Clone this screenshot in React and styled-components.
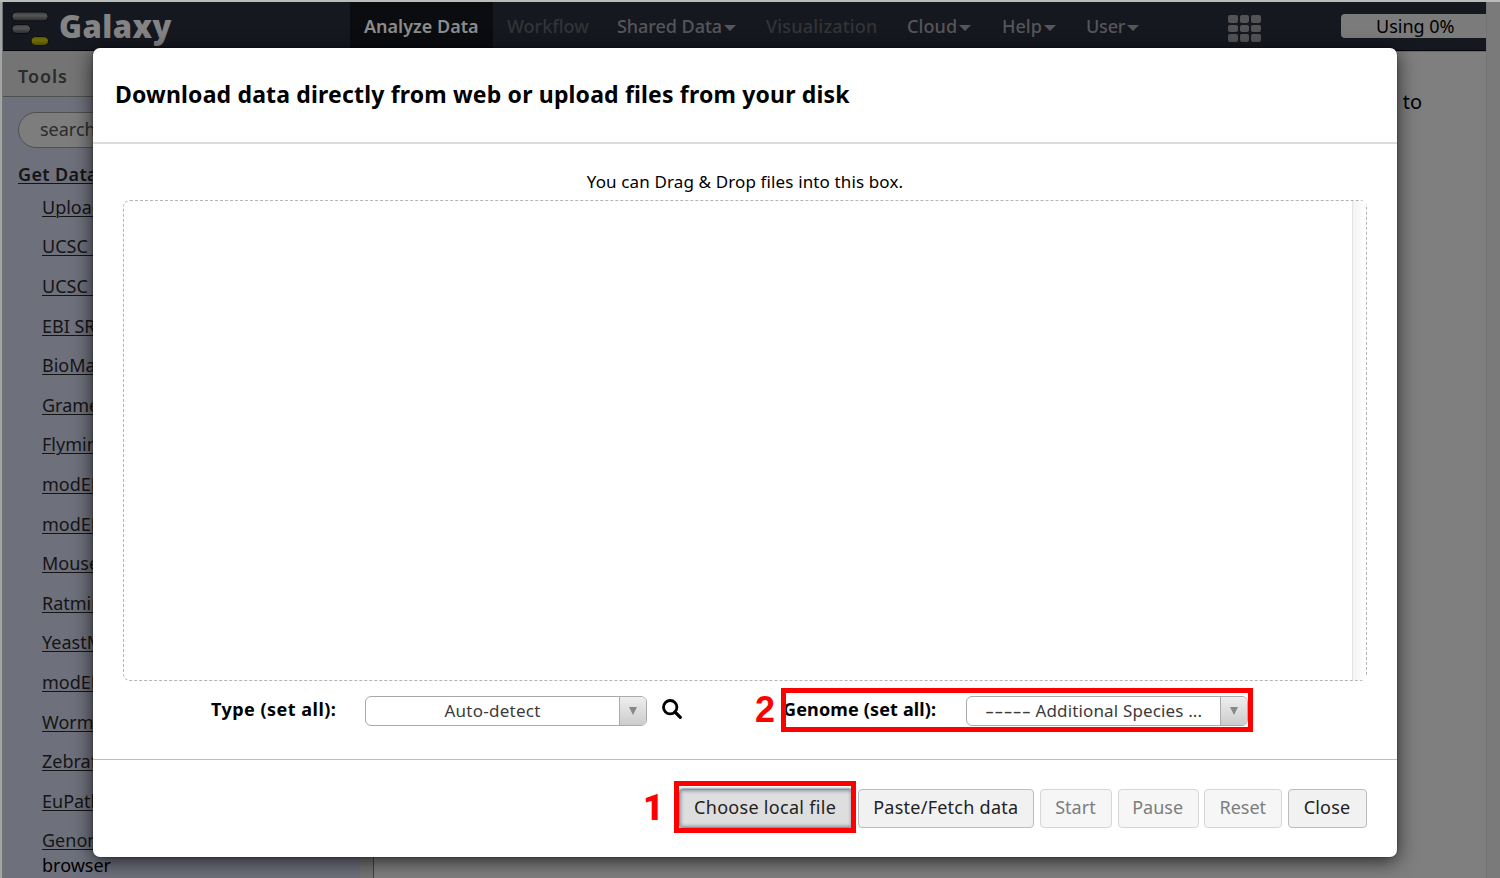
import React from "react";
import styled, { createGlobalStyle } from "styled-components";

const GlobalStyle = createGlobalStyle`
  * { box-sizing: border-box; }
  body {
    margin: 0;
    overflow: hidden;
    background: #7f7f7f;
    font-family: "Noto Sans", "Open Sans", sans-serif;
    font-size: 18px;
    color: #000;
  }
`;

const Page = styled.div`
  position: relative;
  display: flex;
  flex-direction: column;
  width: 1500px;
  height: 878px;
  overflow: hidden;
  border-top: 2px solid #b9bdba;
  white-space: nowrap;
`;

const Window = styled.div`
  flex: 1;
  min-height: 0;
  display: flex;
  border-left: 2px solid #a3a5a4;
`;

const Content = styled.div`
  flex: 1;
  display: flex;
  flex-direction: column;
  border-left: 1px solid #747675;
`;

const Gutter = styled.div`
  width: 14px;
  background: #7a7a7a;
  border-left: 1px solid #737373;
`;

const Masthead = styled.header`
  display: flex;
  height: 49px;
  flex: none;
  background: #161820;
  border-bottom: 1px solid #050608;
  box-shadow: 0 1px 0 #6a6a6a;
`;

const Brand = styled.div`
  display: flex;
  width: 347px;
  padding: 9px 0 0 8px;
`;

const BrandName = styled.span`
  margin: -1px 0 0 7px;
  font-size: 31px;
  font-weight: 900;
  line-height: 32px;
  letter-spacing: 0.5px;
  color: #848484;
`;

const NavItem = styled.a`
  display: flex;
  align-items: center;
  width: ${(p) => p.$width}px;
  padding: 0 0 0 14px;
  font-size: 18px;
  font-weight: ${(p) => (p.$active ? 600 : 500)};
  letter-spacing: ${(p) => p.$spacing || 0}px;
  background: ${(p) => (p.$active ? "#0b0c10" : "transparent")};
  color: ${(p) => (p.$active ? "#8c8c8c" : p.$disabled ? "#343436" : "#565658")};
`;

const Caret = styled.i`
  margin: 3px 0 0 2px;
  border: 6px solid transparent;
  border-top-color: currentColor;
  border-bottom: 0;
`;

const Grid = styled.div`
  display: grid;
  grid-template-columns: repeat(3, 9.5px);
  grid-auto-rows: 7.5px;
  gap: 2px;
  margin: 13px 0 0 77px;
`;

const GridCell = styled.i`
  border-radius: 2px;
  background: #535355;
`;

const Quota = styled.div`
  width: 145px;
  height: 24px;
  margin: 12px 0 0 auto;
  padding-left: 35px;
  border-radius: 4px 0 0 4px;
  background: #7b7b7b;
  font-size: 18px;
  line-height: 24px;
`;

const Columns = styled.div`
  flex: 1;
  min-height: 0;
  display: flex;
`;

const Sidebar = styled.aside`
  width: 357px;
  background: #6e707c;
`;

const SidebarTitle = styled.h2`
  margin: 1px 0 0;
  height: 45px;
  padding-left: 15px;
  border-bottom: 1px solid #505050;
  background: #747474;
  font-size: 18px;
  font-weight: 600;
  line-height: 49px;
  letter-spacing: 0.9px;
  color: #2b2b2b;
`;

const Search = styled.div`
  width: 320px;
  height: 36px;
  margin: 15px 0 0 15px;
  padding-left: 21px;
  border: 1px solid #505050;
  border-radius: 18px;
  background: #7d7d7d;
  line-height: 33px;
  color: #2b2b2b;
`;

const Section = styled.div`
  margin: 13px 0 0 15px;
  font-weight: 600;
  line-height: 26px;
  letter-spacing: 0.35px;
  color: #151515;
  text-decoration: underline;
  text-decoration-thickness: 1px;
  text-underline-offset: 2px;
`;

const Tool = styled.div`
  height: 39.6px;
  padding-left: 39px;
  line-height: 25px;
  color: #000;
`;

const ToolList = styled.div`
  padding-top: 7.9px;
`;

const ToolLink = styled.a`
  color: #151515;
  text-decoration: underline;
  text-decoration-thickness: 1px;
  text-underline-offset: 2px;
`;

const Splitter = styled.div`
  width: 14px;
  border-right: 1px solid #424242;
  background: #747474;
`;

const Main = styled.main`
  flex: 1;
  padding: 38px 64px 0 0;
  text-align: right;
  font-size: 20px;
  line-height: 26px;
`;

const Modal = styled.section`
  position: absolute;
  left: 93px;
  top: 46px;
  width: 1304px;
  height: 809px;
  display: flex;
  flex-direction: column;
  border-radius: 7px;
  background: #fff;
  box-shadow: 0 4px 20px rgba(0, 0, 0, 0.7), 0 0 2px rgba(0, 0, 0, 0.5);
`;

const ModalHeader = styled.header`
  height: 96px;
  padding-left: 22px;
  border-bottom: 2px solid #dcdcdc;
  font-size: 23px;
  font-weight: 700;
  line-height: 92px;
  letter-spacing: 0.17px;
`;

const ModalBody = styled.div`
  flex: 1;
  padding: 26px 30px 0;
`;

const Hint = styled.div`
  height: 30px;
  text-align: center;
  font-size: 17px;
  line-height: 24px;
  letter-spacing: 0.13px;
`;

const DropBox = styled.div`
  display: flex;
  justify-content: flex-end;
  height: 481px;
  border: 1px dashed #b4b4b4;
  border-radius: 7px;
`;

const ScrollTrack = styled.div`
  width: 14px;
  border-left: 1px solid #e4e4e4;
  background: linear-gradient(to right, #f4f4f4, #fff);
`;

const Options = styled.div`
  display: flex;
  align-items: flex-start;
  padding: 15px 0 0 88px;
`;

const Label = styled.b`
  width: ${(p) => p.$width}px;
  font-size: 18px;
  font-weight: 700;
  line-height: 26px;
  letter-spacing: ${(p) => p.$spacing}px;
`;

const Select = styled.div`
  display: flex;
  width: 282px;
  height: 30px;
  border: 1px solid #aaa;
  border-radius: 6px;
  overflow: hidden;
  background: #fff;
  font-size: 17px;
  line-height: 28px;
  color: #3b3b3b;
`;

const SelectText = styled.span`
  flex: 1;
  text-align: center;
  letter-spacing: ${(p) => p.$spacing}px;
`;

const Dashes = styled.span`
  display: inline-block;
  margin-right: 15.5px;
  font-family: "DejaVu Sans", sans-serif;
  letter-spacing: 0;
  transform: scaleX(1.5);
  transform-origin: left;
`;

const SelectArrow = styled.span`
  width: 27px;
  display: flex;
  align-items: center;
  justify-content: center;
  border-left: 1px solid #aaa;
  background: linear-gradient(#eee, #ccc);

  &::after {
    content: "";
    border: 4.5px solid transparent;
    border-top: 8px solid #888;
    border-bottom: 0;
  }
`;

const SearchIcon = styled.svg`
  width: 20px;
  height: 20px;
  margin: 3px 101px 0 15px;
`;

const ModalFooter = styled.footer`
  display: flex;
  justify-content: flex-end;
  gap: 5.7px;
  height: 98px;
  padding: 29px 30px 0 0;
  border-top: 1px solid #bdbdbd;
`;

const Button = styled.button`
  width: ${(p) => p.$width}px;
  height: 39px;
  padding: 0 1px 2px 0;
  border: 1px solid ${(p) => (p.$pressed ? "#8a949e" : p.disabled ? "#d6d6d6" : "#bcbcbc")};
  border-radius: 4px;
  background: ${(p) => (p.$pressed ? "#dedede" : p.disabled ? "#f6f6f6" : "#f1f1f1")};
  box-shadow: ${(p) => (p.$pressed ? "inset 0 0 3px 1.5px #9ba4ae, 0 0 2px 1px #93a0ac" : "none")};
  font-family: inherit;
  font-size: 18px;
  line-height: 35px;
  letter-spacing: ${(p) => p.$spacing || 0}px;
  color: ${(p) => (p.disabled ? "#7d7d7d" : "#222")};
`;

const Highlight = styled.div`
  position: absolute;
  left: ${(p) => p.$x}px;
  top: ${(p) => p.$y}px;
  width: ${(p) => p.$width}px;
  height: ${(p) => p.$height}px;
  border: 5px solid #f00;
`;

const StepNumber = styled.b`
  position: absolute;
  left: ${(p) => p.$x}px;
  top: ${(p) => p.$y}px;
  font-family: ${(p) => p.$font}, sans-serif;
  font-size: 36px;
  font-weight: 900;
  line-height: 36px;
  color: #f00;
`;

const nav = [
  { label: "Analyze Data", width: 143, active: true },
  { label: "Workflow", width: 110, disabled: true },
  { label: "Shared Data", width: 149, caret: true, spacing: -0.05 },
  { label: "Visualization", width: 141, disabled: true, spacing: 0.2 },
  { label: "Cloud", width: 95, caret: true, spacing: 0.1 },
  { label: "Help", width: 84, caret: true },
  { label: "User", width: 79, caret: true, spacing: -0.2 },
];

const tools = [
  "Upload File",
  "UCSC Main",
  "UCSC Archaea",
  "EBI SRA",
  "BioMart",
  "GrameneMart",
  "Flymine",
  "modENCODE fly",
  "modENCODE modMine",
  "MouseMine",
  "Ratmine",
  "YeastMine",
  "modENCODE worm",
  "WormBase",
  "ZebrafishMine",
  "EuPathDB",
];

function Logo() {
  return (
    <svg width="41" height="40" viewBox="0 0 41 40">
      <defs>
        <linearGradient id="bar" x1="0" y1="0" x2="0" y2="1">
          <stop offset="0" stopColor="#3e3e40" />
          <stop offset="0.4" stopColor="#565657" />
          <stop offset="1" stopColor="#2a2a2c" />
        </linearGradient>
        <linearGradient id="accent" x1="0" y1="0" x2="0" y2="1">
          <stop offset="0" stopColor="#55510a" />
          <stop offset="0.4" stopColor="#757000" />
          <stop offset="1" stopColor="#4c4900" />
        </linearGradient>
      </defs>
      <g stroke="#0b0c10" strokeWidth="1">
        <rect x="1" y="1" width="36" height="9" rx="4.5" fill="url(#bar)" />
        <rect x="1" y="13.500" width="18.500" height="9" rx="4.500" fill="url(#bar)" />
        <rect x="20" y="25.500" width="17.500" height="9" rx="4.500" fill="url(#accent)" />
      </g>
    </svg>
  );
}

export default function App() {
  return (
    <Page>
      <GlobalStyle />
      <Window>
        <Content>
          <Masthead>
            <Brand>
              <Logo />
              <BrandName>Galaxy</BrandName>
            </Brand>
            {nav.map((item) => (
              <NavItem
                key={item.label}
                $width={item.width}
                $active={item.active}
                $disabled={item.disabled}
                $spacing={item.spacing}
              >
                {item.label}
                {item.caret && <Caret />}
              </NavItem>
            ))}
            <Grid>
              {Array.from({ length: 9 }, (_, i) => (
                <GridCell key={i} />
              ))}
            </Grid>
            <Quota>Using 0%</Quota>
          </Masthead>
          <Columns>
            <Sidebar>
              <SidebarTitle>Tools</SidebarTitle>
              <Search>search tools</Search>
              <Section>Get Data</Section>
              <ToolList>
                {tools.map((name) => (
                  <Tool key={name}>
                    <ToolLink>{name}</ToolLink>
                  </Tool>
                ))}
                <Tool>
                  <ToolLink>GenomeSpace import</ToolLink>
                  <br />
                  browser
                </Tool>
              </ToolList>
            </Sidebar>
            <Splitter />
            <Main>to</Main>
          </Columns>
        </Content>
        <Gutter />
      </Window>

      <Modal>
        <ModalHeader>Download data directly from web or upload files from your disk</ModalHeader>
        <ModalBody>
          <Hint>You can Drag &amp; Drop files into this box.</Hint>
          <DropBox>
            <ScrollTrack />
          </DropBox>
          <Options>
            <Label $width={154} $spacing={0.48}>Type (set all):</Label>
            <Select>
              <SelectText $spacing={0.25}>Auto-detect</SelectText>
              <SelectArrow />
            </Select>
            <SearchIcon viewBox="0 0 20 20">
              <circle cx="8.200" cy="8.200" r="6.700" fill="none" stroke="#000" strokeWidth="2.800" />
              <path d="M13 13l5.300 5.300" stroke="#000" strokeWidth="3.200" strokeLinecap="round" />
            </SearchIcon>
            <Label $width={183} $spacing={0.15}>Genome (set all):</Label>
            <Select>
              <SelectText $spacing={0.15}>
                <Dashes>-----</Dashes> Additional Species ...
              </SelectText>
              <SelectArrow />
            </Select>
          </Options>
        </ModalBody>
        <ModalFooter>
          <Button $width={174} $spacing={0.3} $pressed>Choose local file</Button>
          <Button $width={176} $spacing={0.25}>Paste/Fetch data</Button>
          <Button $width={72} disabled>Start</Button>
          <Button $width={81} disabled>Pause</Button>
          <Button $width={78} disabled>Reset</Button>
          <Button $width={79} $spacing={0.2}>Close</Button>
        </ModalFooter>
      </Modal>

      <StepNumber $x={755} $y={690} $font='"Liberation Sans"'>2</StepNumber>
      <Highlight $x={781} $y={686} $width={472} $height={44} />
      <StepNumber $x={643} $y={788} $font="Roboto">1</StepNumber>
      <Highlight $x={674} $y={779} $width={182} $height={52} />
    </Page>
  );
}
